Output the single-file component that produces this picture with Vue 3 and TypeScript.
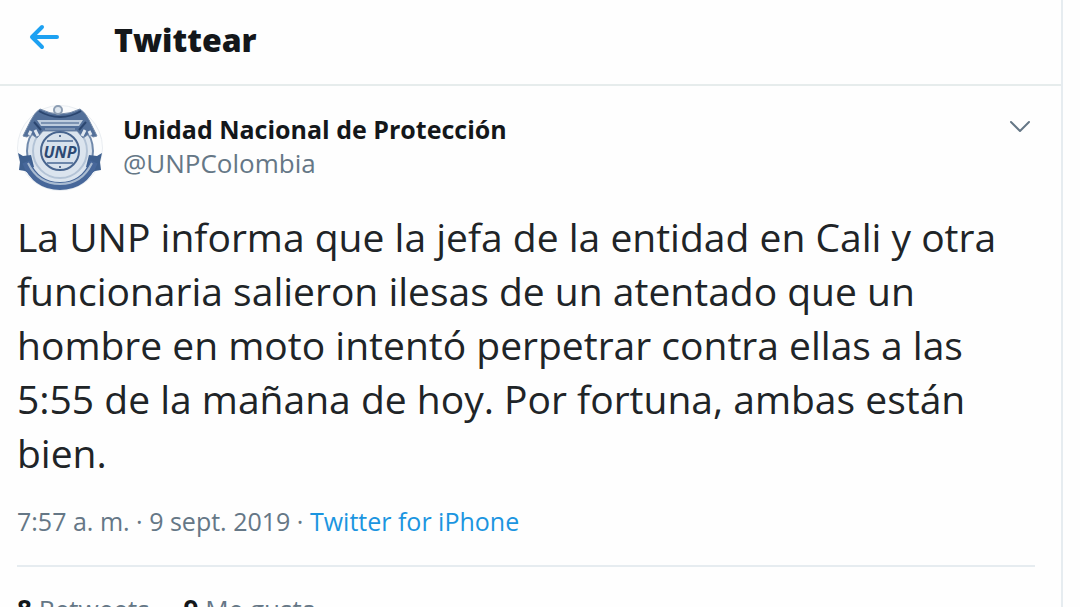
<script setup lang="ts">
interface Stat {
  count: number
  label: string
}

const author = { name: 'Unidad Nacional de Protección', handle: '@UNPColombia' }
const message =
  'La UNP informa que la jefa de la entidad en Cali y otra funcionaria salieron ilesas de un atentado que un hombre en moto intentó perpetrar contra ellas a las 5:55 de la mañana de hoy. Por fortuna, ambas están bien.'
const stats: Stat[] = [
  { count: 8, label: 'Retweets' },
  { count: 9, label: 'Me gusta' },
]
</script>

<template>
  <main class="column">
    <header class="topbar">
      <button class="icon-button" type="button" aria-label="Atrás">
        <svg class="back" viewBox="0 0 32 28" aria-hidden="true">
          <path d="M14 4 4 14l10 10M4 14h25" />
        </svg>
      </button>
      <h1 class="title">Twittear</h1>
    </header>

    <article class="tweet">
      <div class="author">
        <svg class="avatar" viewBox="0 0 86 86" role="img" aria-label="Escudo UNP">
          <circle cx="43" cy="43" r="42.500" fill="#fbfcfd" stroke="#e9edf1" />
          <circle cx="43" cy="46" r="33" fill="#dbe4ee" stroke="#7089ab" stroke-width="2" />
          <circle cx="43" cy="46" r="27" fill="none" stroke="#b3c3d6" stroke-width="2" />
          <path d="M1 48l5 3 8-1 3 12-5 2 2 6-6-4-6-1 1-8zM85 48l-5 3-8-1-3 12 5 2-2 6 6-4 6-1-1-8z" fill="#3f608f" />
          <path d="M9 57q10 24 34 24t34-24" fill="none" stroke="#47679a" stroke-width="8" />
          <path d="M11 58q10 21 32 21t32-21" fill="none" stroke="#a9bbd1" stroke-width="2" />
          <path d="M23 4q10 5 20 5t20-5q5 3 9 11l8 16-4 1-4-3-6 4-6-7H26l-6 7-6-4-4 3-4-1 8-16Q18 7 23 4z" fill="#526f99" stroke="#7389a8" />
          <path d="M22 6q10 6 21 6t21-6M17 17l7 8M69 17l-7 8" fill="none" stroke="#2c4770" stroke-width="2" />
          <path d="M20 15h46l-4 6H24z" fill="#bdccdd" />
          <path d="M24 18h38M28 24h30" stroke="#7c93b2" stroke-width="2" />
          <path d="M18 25l3 6M14 26l-2 4M68 25l-3 6M72 26l2 4" stroke="#e1e8f0" stroke-width="3" />
          <circle cx="41" cy="5" r="4" fill="#dfe7ef" stroke="#8d9eb3" stroke-width="2" />
          <circle cx="43" cy="46" r="19" fill="#d7e1ec" stroke="#48658f" stroke-width="2" />
          <path d="M30 36h26M30 58h26" stroke="#6c86aa" stroke-width="2" />
          <circle cx="43" cy="31" r="1" fill="#304d78" />
          <circle cx="43" cy="62" r="1" fill="#304d78" />
          <text x="43" y="53" text-anchor="middle" class="seal">UNP</text>
        </svg>
        <div class="names">
          <span class="name">{{ author.name }}</span>
          <span class="handle">{{ author.handle }}</span>
        </div>
        <button class="icon-button more" type="button" aria-label="Más opciones">
          <svg class="chevron" viewBox="0 0 22 14" aria-hidden="true">
            <path d="M2 2l9 9 9-9" />
          </svg>
        </button>
      </div>

      <p class="message">{{ message }}</p>

      <p class="meta">
        7:57 a. m. · 9 sept. 2019 · <a href="#">Twitter for iPhone</a>
      </p>

      <footer class="stats">
        <span v-for="stat in stats" :key="stat.label"><strong>{{ stat.count }}</strong> {{ stat.label }}</span>
      </footer>
    </article>
  </main>
</template>

<style>
body {
  background: #fefefe;
  overflow: hidden;
}
</style>

<style scoped>
.column {
  box-sizing: border-box;
  height: 100vh;
  overflow: hidden;
  margin-right: 17px;
  border-right: 2px solid #e6ecf0;
  font-family: "Open Sans", "Noto Sans", sans-serif;
  font-size: 25px;
  color: #14171a;
}

.topbar {
  display: flex;
  align-items: center;
  gap: 54px;
  box-sizing: border-box;
  height: 86px;
  padding: 0 28px 4px;
  border-bottom: 2px solid #e6ecec;
}

.icon-button {
  display: flex;
  padding: 0;
  border: 0;
  background: none;
  cursor: pointer;
}

.icon-button svg {
  fill: none;
  stroke-linecap: round;
  stroke-linejoin: round;
}

.back {
  width: 32px;
  height: 28px;
  margin-bottom: 6px;
  stroke: #1da1f2;
  stroke-width: 4;
}

.title {
  margin: 0;
  font-size: 32px;
  line-height: 40px;
  font-weight: 800;
}

.tweet {
  padding: 19px 26px 0 17px;
}

.author {
  display: flex;
  align-items: flex-start;
  gap: 20px;
}

.avatar {
  flex: none;
  width: 86px;
  height: 86px;
}

.seal {
  font: italic 700 16px "Open Sans", "Liberation Sans", sans-serif;
  fill: #2c4973;
}

.names {
  display: flex;
  flex: 1;
  flex-direction: column;
  padding-top: 7px;
  line-height: 34px;
}

.name {
  font-weight: 700;
}

.handle,
.stats {
  font-size: 26px;
}

.handle,
.meta,
.stats {
  color: #657786;
}

.more {
  padding: 15px 4px 0 0;
}

.chevron {
  width: 22px;
  height: 14px;
  stroke: #657786;
  stroke-width: 2;
}

.message {
  margin: 19px 0 0;
  font-size: 39px;
  line-height: 54px;
  color: #202427;
}

.meta {
  margin: 23px 0 0;
  padding-bottom: 26px;
  border-bottom: 2px solid #e6ecf0;
  line-height: 36px;
}

.meta a {
  color: #1b95e0;
  text-decoration: none;
}

.stats {
  display: flex;
  gap: 34px;
  padding-top: 24px;
  line-height: 36px;
}

.stats strong {
  color: #14171a;
}
</style>
